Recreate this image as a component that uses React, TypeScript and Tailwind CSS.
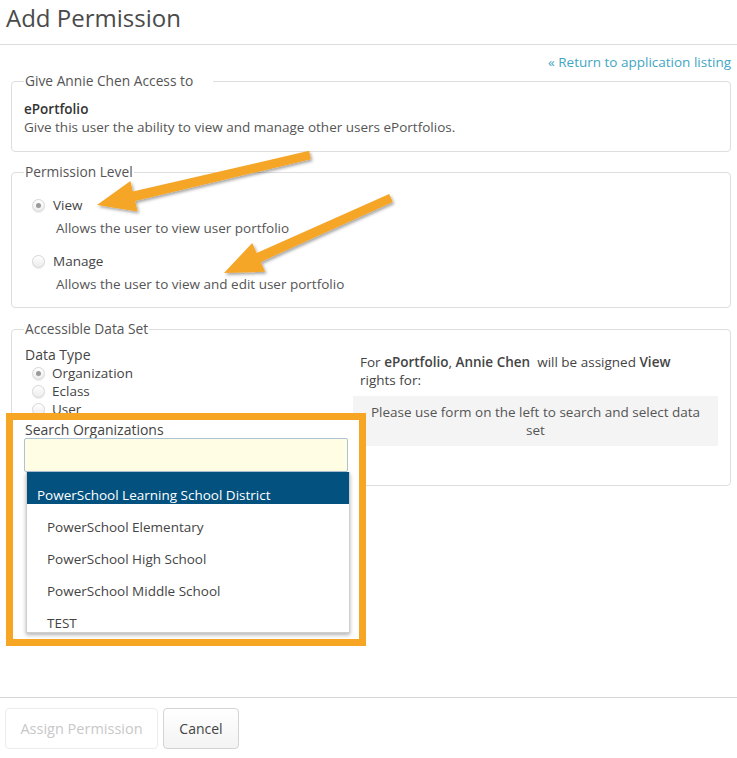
import React from "react";

function Radio({ checked }: { checked?: boolean }) {
  return (
    <span className="inline-flex h-[13px] w-[13px] shrink-0 items-center justify-center rounded-full border border-[#d6d6d6] bg-gradient-to-b from-white to-[#ececec] shadow-[0_1px_1px_rgba(0,0,0,0.08)]">
      {checked && <span className="h-[5px] w-[5px] rounded-full bg-[#9a9a9a]" />}
    </span>
  );
}

function Arrows() {
  return (
    <svg
      className="pointer-events-none absolute left-0 top-0"
      width="737"
      height="758"
      viewBox="0 0 737 758"
    >
      <defs>
        <filter id="sh" x="-20%" y="-20%" width="140%" height="140%">
          <feDropShadow dx="1.5" dy="2" stdDeviation="1.6" floodColor="#000" floodOpacity="0.35" />
        </filter>
      </defs>
      <polygon
        filter="url(#sh)"
        fill="#f5a628"
        points="97,205 137.6,211.5 135.2,201 310.9,159.2 309.1,150.8 132.8,191.6 130.4,181"
      />
      <polygon
        filter="url(#sh)"
        fill="#f5a628"
        points="224,273 265.2,271.8 260.7,261.9 392.8,202 389.2,194 256.7,252.9 252.2,243"
      />
    </svg>
  );
}

export default function App() {
  const items = [
    "PowerSchool Elementary",
    "PowerSchool High School",
    "PowerSchool Middle School",
    "TEST",
  ];
  return (
    <div className="relative flex h-[758px] w-[737px] flex-col overflow-hidden bg-white font-['Open_Sans',sans-serif] text-[13.5px] leading-[18px] text-[#333]">
      <header className="h-[45px] border-b border-[#dcdcdc] px-[6px]">
        <h1 className="text-[24px] font-normal leading-[36px] text-[#4a4a4a]">Add Permission</h1>
      </header>

      <main className="flex flex-col">
        <div className="mt-[8px] pr-[6px] text-right">
          <a className="text-[#3fa6c3]">« Return to application listing</a>
        </div>

        <fieldset className="ml-[11px] mr-[6px] rounded-[4px] border border-[#dedede] px-[12px] pb-[15px] pt-[9px]">
          <legend className="pl-[1px] pr-[20px] text-[13.75px] leading-[20px] text-[#555]">Give Annie Chen Access to</legend>
          <div className="font-semibold text-[#333]">ePortfolio</div>
          <div className="text-[#555]">Give this user the ability to view and manage other users ePortfolios.</div>
        </fieldset>

        <fieldset className="ml-[11px] mr-[6px] mt-[10px] rounded-[4px] border border-[#dedede] px-[12px] pb-[14px] pt-[14px]">
          <legend className="px-[1px] text-[13.75px] leading-[20px] text-[#555]">Permission Level</legend>
          <label className="ml-[8px] flex items-center gap-[8px] text-[#444]">
            <Radio checked />
            View
          </label>
          <div className="ml-[32px] mt-[5px] text-[#555]">Allows the user to view user portfolio</div>
          <label className="ml-[8px] mt-[15px] flex items-center gap-[8px] text-[#444]">
            <Radio />
            Manage
          </label>
          <div className="ml-[32px] mt-[5px] text-[#555]">Allows the user to view and edit user portfolio</div>
        </fieldset>

        <fieldset className="ml-[11px] mr-[6px] mt-[11px] rounded-[4px] border border-[#dedede] px-[12px] pb-[15px] pt-[7px]">
          <legend className="px-[1px] text-[13.75px] leading-[20px] text-[#555]">Accessible Data Set</legend>
          <div className="grid grid-cols-[1fr_365px] gap-x-[12px]">
            <div className="flex flex-col">
              <div className="pl-[1px] text-[14px] text-[#444]">Data Type</div>
              <label className="ml-[8px] flex items-center gap-[7px] text-[#444]">
                <Radio checked />
                Organization
              </label>
              <label className="ml-[8px] flex items-center gap-[7px] text-[#444]">
                <Radio />
                Eclass
              </label>
              <label className="ml-[8px] flex items-center gap-[7px] text-[#444]">
                <Radio />
                User
              </label>
              <div className="h-[52px]" />
            </div>
            <div className="flex flex-col pt-[7px]">
              <div className="px-[7px] text-[#444]">
                For <span className="font-semibold">ePortfolio</span>, <span className="font-semibold">Annie Chen</span>&nbsp; will be assigned{" "}
                <span className="font-semibold">View</span>
                <br />
                rights for:
              </div>
              <div className="mt-[7px] bg-[#f4f4f4] px-[7px] py-[7px] text-center text-[#555]">
                Please use form on the left to search and select data
                <br />
                set
              </div>
            </div>
          </div>
        </fieldset>
      </main>

      <footer className="mt-auto flex gap-[5px] border-t border-[#d6d6d6] px-[5px] pb-[9px] pt-[10px]">
        <button className="h-[41px] w-[153px] rounded-[4px] border border-[#ececec] bg-white text-[14.5px] text-[#c8c8c8]">
          Assign Permission
        </button>
        <button className="h-[41px] w-[76px] rounded-[4px] border border-[#d4d4d4] bg-gradient-to-b from-white to-[#f3f3f3] text-[14px] text-[#444]">
          Cancel
        </button>
      </footer>

      <Arrows />

      <div className="absolute left-[6px] top-[413px] flex h-[233px] w-[360px] flex-col border-[7px] border-[#f6a623] bg-white">
        <div className="pl-[12px] pt-[1px] text-[14px] text-[#444]">Search Organizations</div>
        <div className="ml-[11px] -mt-[1px] h-[34px] w-[324px] rounded-[2px] border border-[#aec2d6] bg-[#fffee4]" />
        <ul className="ml-[13px] w-[324px] border border-t-0 border-[#cfcfcf] bg-white shadow-[0_2px_4px_rgba(0,0,0,0.3)]">
          <li className="h-[32px] bg-[#03517e] pl-[10px] pt-[14px] text-white">PowerSchool Learning School District</li>
          {items.map((t) => (
            <li key={t} className="h-[32px] pl-[20px] pt-[14px] text-[#444]">
              {t}
            </li>
          ))}
        </ul>
      </div>
    </div>
  );
}
